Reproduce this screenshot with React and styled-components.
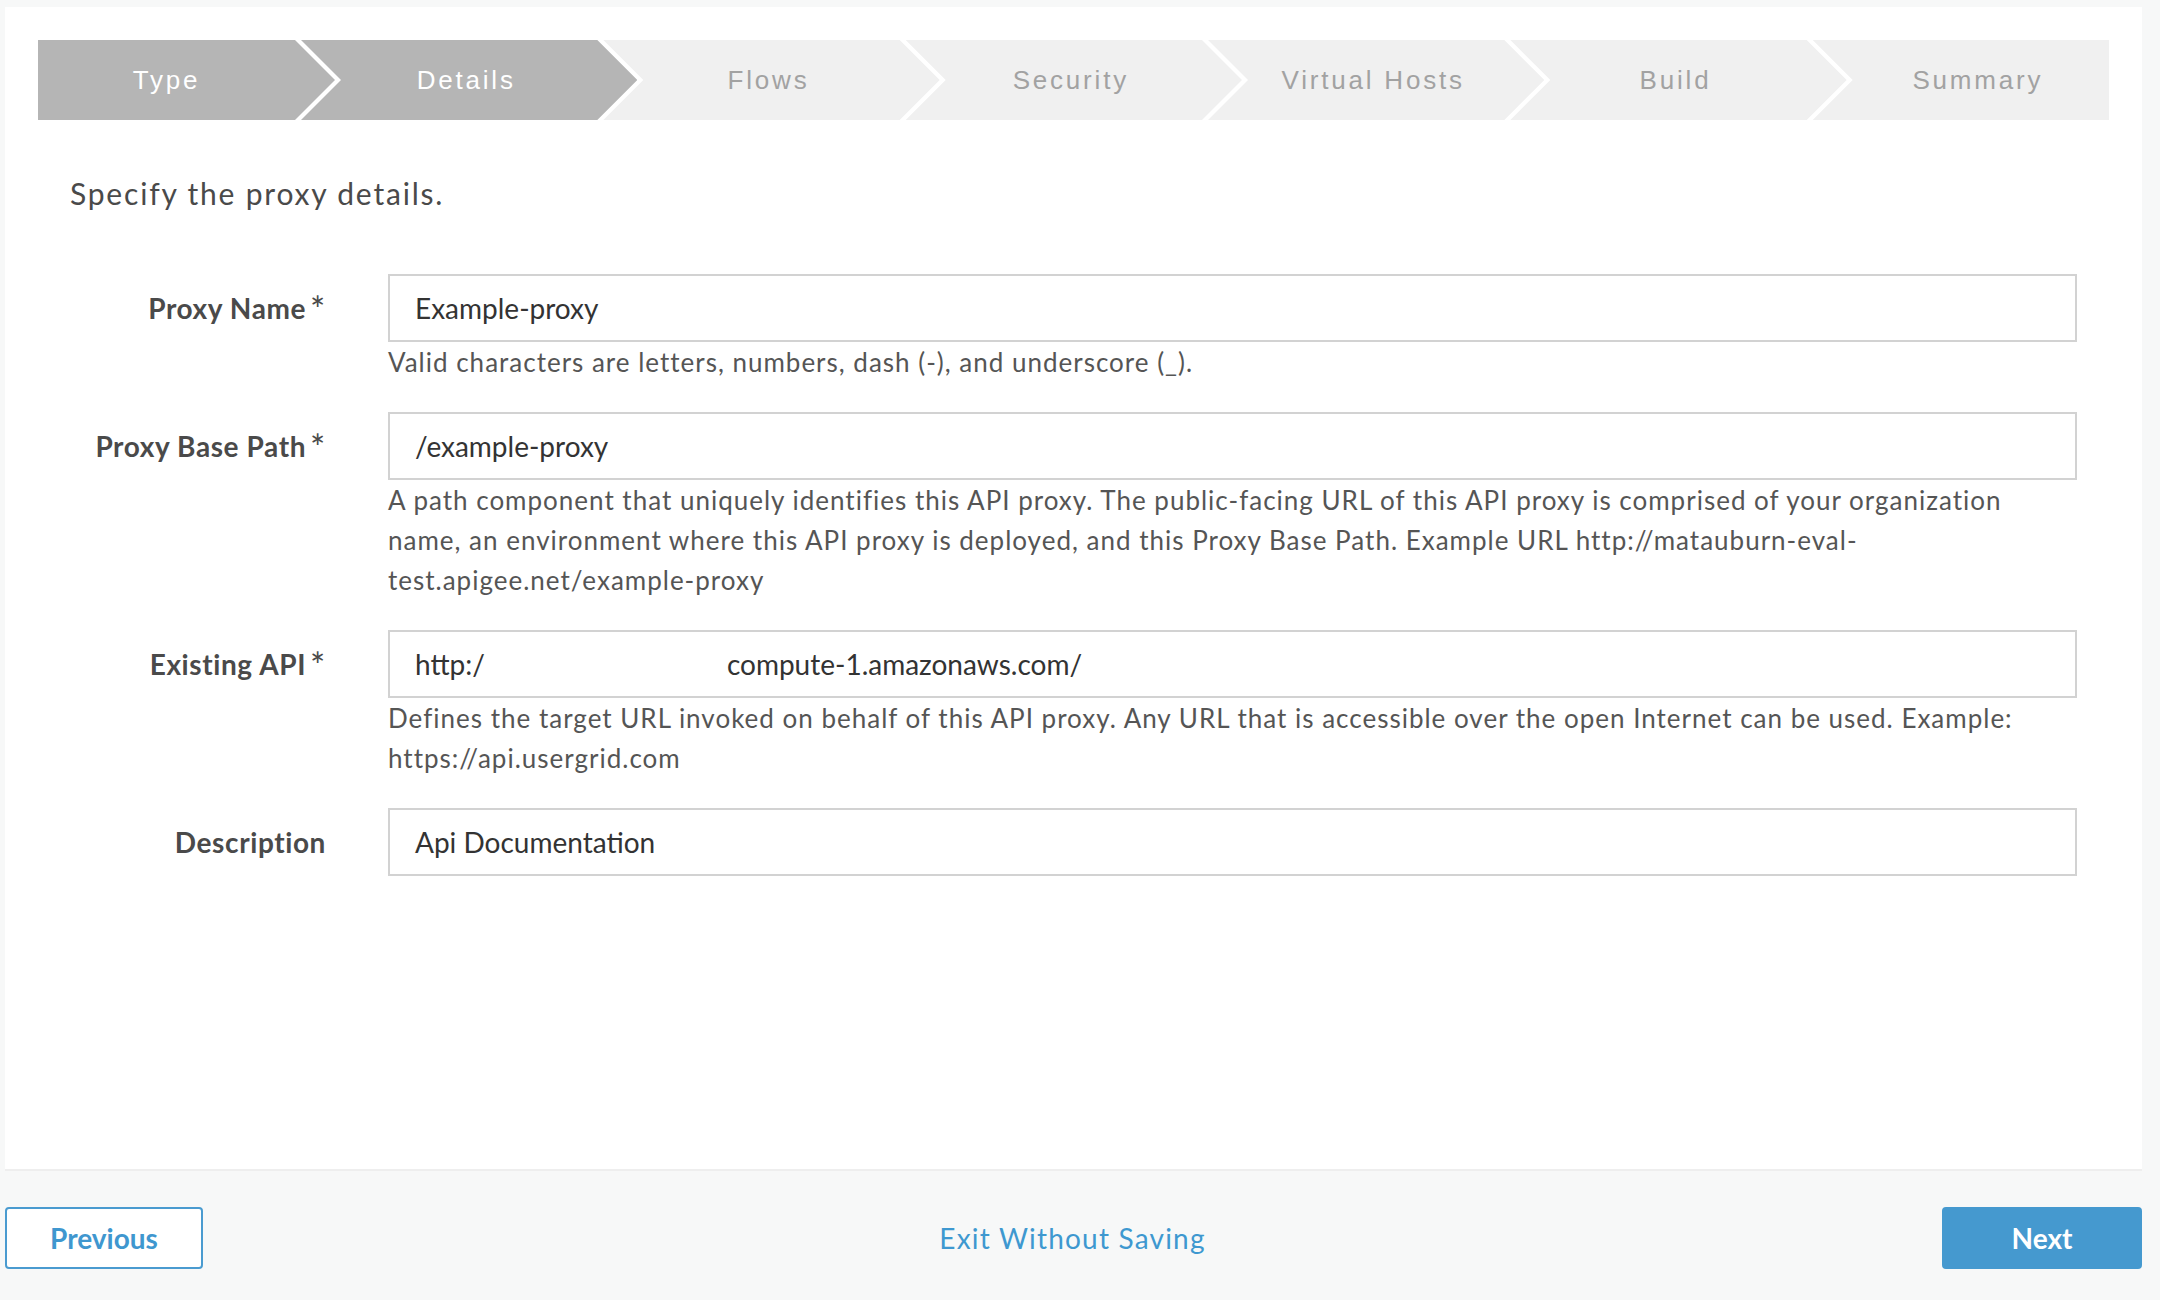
import styled, { createGlobalStyle } from 'styled-components';

const ARROW = 40;
const GAP = 6;

const steps = ['Type', 'Details', 'Flows', 'Security', 'Virtual Hosts', 'Build', 'Summary'];
const activeCount = 2;

const fields = [
  {
    label: 'Proxy Name',
    required: true,
    value: 'Example-proxy',
    help: ['Valid characters are letters, numbers, dash (-), and underscore (_).'],
  },
  {
    label: 'Proxy Base Path',
    required: true,
    value: '/example-proxy',
    help: [
      'A path component that uniquely identifies this API proxy. The public-facing URL of this API proxy is comprised of your organization name, an environment where this API proxy is deployed, and this Proxy Base Path. Example URL http://matauburn-eval-',
      'test.apigee.net/example-proxy',
    ],
  },
  {
    label: 'Existing API',
    required: true,
    value: null,
    help: [
      'Defines the target URL invoked on behalf of this API proxy. Any URL that is accessible over the open Internet can be used. Example: https://api.usergrid.com',
    ],
  },
  {
    label: 'Description',
    required: false,
    value: 'Api Documentation',
  },
];

export default function App() {
  return (
    <>
      <GlobalStyle />
      <Page>
        <Panel>
          <Stepper>
            {steps.map((step, index) => (
              <Step
                key={step}
                $active={index < activeCount}
                $first={index === 0}
                $last={index === steps.length - 1}
              >
                {step}
              </Step>
            ))}
          </Stepper>

          <Intro>Specify the proxy details.</Intro>

          <Form>
            {fields.map(field => (
              <Row key={field.label}>
                <Label>
                  {field.label}
                  {field.required && <Star>*</Star>}
                </Label>
                <Field>
                  <Input>
                    {field.value !== null ? (
                      field.value
                    ) : (
                      <>
                        http:/
                        <Redacted />
                        compute-1.amazonaws.com/
                      </>
                    )}
                  </Input>
                  {field.help && (
                    <Help>
                      {field.help.map((line, i) => (
                        <span key={i}>
                          {line}
                          {i < field.help.length - 1 && <br />}
                        </span>
                      ))}
                    </Help>
                  )}
                </Field>
              </Row>
            ))}
          </Form>
        </Panel>

        <Footer>
          <OutlineButton>Previous</OutlineButton>
          <ExitLink>Exit Without Saving</ExitLink>
          <PrimaryButton>Next</PrimaryButton>
        </Footer>
      </Page>
    </>
  );
}

const GlobalStyle = createGlobalStyle`
  html, body {
    margin: 0;
    padding: 0;
    background: #f7f8f8;
    font-family: Lato, "Open Sans", sans-serif;
  }
  * { box-sizing: border-box; }
`;

const Page = styled.div`
  width: 2160px;
  height: 1300px;
  padding: 7px 18px 0 5px;
  display: flex;
  flex-direction: column;
`;

const Panel = styled.div`
  height: 1164px;
  background: #fff;
  border-bottom: 2px solid #eeeeee;
  padding: 33px 33px 0 33px;
`;

const Stepper = styled.div`
  display: grid;
  grid-template-columns: 257px repeat(6, 1fr);
  height: 80px;
`;

const Step = styled.div`
  height: 80px;
  width: ${p => (p.$last ? '100%' : `calc(100% + ${ARROW}px)`)};
  padding-left: ${p => (p.$first ? 0 : ARROW)}px;
  padding-right: ${p => (p.$last ? 0 : ARROW)}px;
  display: flex;
  align-items: center;
  justify-content: center;
  background: ${p => (p.$active ? '#b5b5b5' : '#f0f0f0')};
  color: ${p => (p.$active ? '#ffffff' : '#a2a2a2')};
  font-family: "Liberation Sans", Arial, sans-serif;
  font-size: 26px;
  letter-spacing: 2.8px;
  white-space: nowrap;
  clip-path: ${p => {
    const left = p.$first ? '0 0' : `${GAP}px 0`;
    const right = p.$last
      ? '100% 0, 100% 100%'
      : `calc(100% - ${ARROW}px) 0, 100% 50%, calc(100% - ${ARROW}px) 100%`;
    const bottom = p.$first ? '0 100%' : `${GAP}px 100%, ${GAP + ARROW}px 50%`;
    return `polygon(${left}, ${right}, ${bottom})`;
  }};
`;

const Intro = styled.p`
  margin: 53px 0 0 32px;
  font-size: 30px;
  line-height: 40px;
  color: #4a4a4a;
  letter-spacing: 1.8px;
`;

const Form = styled.div`
  margin-top: 61px;
  padding-right: 32px;
  display: flex;
  flex-direction: column;
  gap: 30px;
`;

const Row = styled.div`
  display: grid;
  grid-template-columns: 288px 1fr;
  column-gap: 62px;
  align-items: start;
`;

const Label = styled.div`
  height: 68px;
  display: flex;
  align-items: center;
  justify-content: flex-end;
  font-weight: 700;
  font-size: 28px;
  color: #4a4a4a;
  letter-spacing: 0.6px;
`;

const Star = styled.span`
  align-self: flex-start;
  margin-top: 17px;
  margin-left: 4px;
  font-size: 36px;
  line-height: 36px;
  font-weight: 400;
`;

const Field = styled.div`
  display: flex;
  flex-direction: column;
`;

const Input = styled.div`
  height: 68px;
  border: 2px solid #d2d2d2;
  background: #fff;
  padding: 0 25px;
  display: flex;
  align-items: center;
  font-size: 28px;
  color: #333;
  white-space: nowrap;
`;

const Redacted = styled.span`
  display: inline-block;
  width: 242px;
`;

const Help = styled.div`
  padding-right: 24px;
  font-size: 26px;
  line-height: 40px;
  color: #555;
  letter-spacing: 1px;
`;

const Footer = styled.div`
  flex: 1;
  display: flex;
  align-items: center;
  justify-content: space-between;
  padding-top: 4px;
`;

const OutlineButton = styled.button`
  width: 198px;
  height: 62px;
  border: 2px solid #4a9bd0;
  border-radius: 4px;
  background: #fff;
  color: #3f97cf;
  font-family: Lato, sans-serif;
  font-weight: 700;
  font-size: 28px;
`;

const PrimaryButton = styled(OutlineButton)`
  width: 200px;
  background: #4599cf;
  border-color: #4599cf;
  color: #fff;
`;

const ExitLink = styled.a`
  color: #3e98d0;
  font-size: 28px;
  letter-spacing: 1.2px;
  cursor: pointer;
`;
